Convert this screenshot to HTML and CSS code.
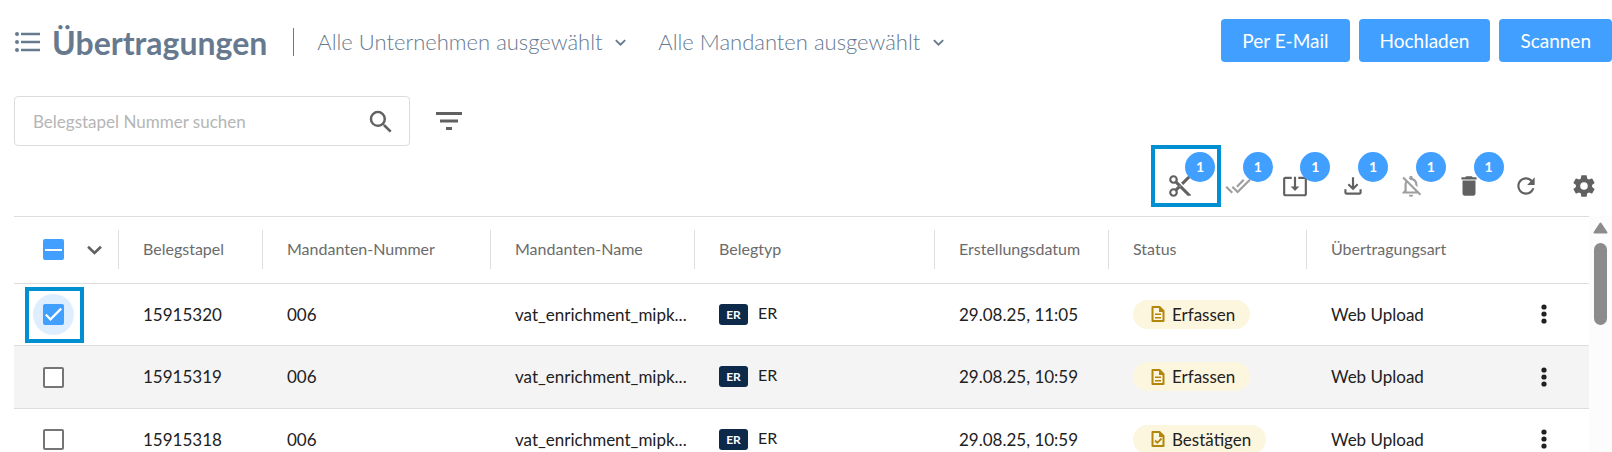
FILE: index.html
```html
<!DOCTYPE html>
<html lang="de">
<head>
    <meta charset="UTF-8">
    <meta name="viewport" content="width=device-width, initial-scale=1">
    <title>Übertragungen</title>
    <link rel="stylesheet" href="styles.css">
</head>
<body>
    <!-- icons used more than once -->
    <svg class="sprite" aria-hidden="true">
        <symbol id="chevron" viewBox="0 0 14 9">
            <path d="M1 1.500l6 5.800 6-5.800" fill="none" stroke="currentColor" stroke-width="2.400"/>
        </symbol>
        <symbol id="more" viewBox="0 0 6 20">
            <circle cx="3" cy="3" r="2.600"/><circle cx="3" cy="10" r="2.600"/><circle cx="3" cy="17" r="2.600"/>
        </symbol>
        <symbol id="doc-text" viewBox="0 0 14 18">
            <path d="M1.500 2h7L12.500 6V16h-11z" fill="none" stroke="currentColor" stroke-width="2" stroke-linejoin="round"/>
            <path d="M8 1.500V7h5zM4 8.500h6V10H4zM4 12h6v1.500H4z"/>
        </symbol>
        <symbol id="doc-check" viewBox="0 0 14 18">
            <path d="M1.500 2h7L12.500 6V16h-11z" fill="none" stroke="currentColor" stroke-width="2" stroke-linejoin="round"/>
            <path d="M8 1.500V7h5z"/>
            <path d="M4 10.500l2.300 2.300L10.500 8.500" fill="none" stroke="currentColor" stroke-width="1.800"/>
        </symbol>
    </svg>

    <header class="header">
        <svg class="title-icon" viewBox="0 0 26 22" aria-hidden="true">
            <circle cx="2" cy="3" r="2"/><circle cx="2" cy="11" r="2"/><circle cx="2" cy="19" r="2"/>
            <path d="M6 1.700h19v2.600H6zM6 9.700h19v2.600H6zM6 17.700h19v2.600H6z"/>
        </svg>
        <h1>Übertragungen</h1>
        <div class="scope">
            <div class="picker">
                <select aria-label="Unternehmen">
                    <option>Alle Unternehmen ausgewählt</option>
                </select>
                <svg class="picker-arrow" aria-hidden="true"><use href="#chevron"/></svg>
            </div>
            <div class="picker">
                <select aria-label="Mandanten">
                    <option>Alle Mandanten ausgewählt</option>
                </select>
                <svg class="picker-arrow" aria-hidden="true"><use href="#chevron"/></svg>
            </div>
        </div>
        <div class="actions">
            <button class="btn" type="button">Per E-Mail</button>
            <button class="btn" type="button">Hochladen</button>
            <button class="btn" type="button">Scannen</button>
        </div>
    </header>

    <form class="search-row">
        <div class="search">
            <input type="text" aria-label="Belegstapel Nummer suchen" placeholder="Belegstapel Nummer suchen">
            <button class="plain" type="button" aria-label="Suchen">
                <svg class="icon icon-lg" viewBox="0 0 24 24"><path d="M15.500 14h-.79l-.28-.27A6.471 6.471 0 0 0 16 9.500 6.500 6.500 0 1 0 9.500 16c1.610 0 3.090-.59 4.230-1.570l.27.28v.79l5 4.990L20.490 19l-4.990-5zm-6 0C7.010 14 5 11.990 5 9.500S7.010 5 9.500 5 14 7.010 14 9.500 11.990 14 9.500 14z"/></svg>
            </button>
        </div>
        <button class="plain" type="button" aria-label="Filter">
            <svg class="icon filter-icon" viewBox="0 0 26 18"><path d="M0 0h26v3H0zM4 7.500h18v3H4zM10 15h6v3h-6z"/></svg>
        </button>
    </form>

    <div class="toolbar">
        <button class="tool" type="button" aria-label="Trennen">
            <svg class="icon" viewBox="0 0 24 24"><path d="M19,3L13,9L15,11L22,4V3M12,12.500A0.500,0.500 0 0,1 11.500,12A0.500,0.500 0 0,1 12,11.500A0.500,0.500 0 0,1 12.500,12A0.500,0.500 0 0,1 12,12.500M6,20A2,2 0 0,1 4,18C4,16.890 4.900,16 6,16A2,2 0 0,1 8,18C8,19.110 7.100,20 6,20M6,8A2,2 0 0,1 4,6C4,4.890 4.900,4 6,4A2,2 0 0,1 8,6C8,7.110 7.100,8 6,8M9.640,7.640C9.870,7.140 10,6.590 10,6A4,4 0 0,0 6,2A4,4 0 0,0 2,6A4,4 0 0,0 6,10C6.590,10 7.140,9.870 7.640,9.640L10,12L7.640,14.360C7.140,14.130 6.590,14 6,14A4,4 0 0,0 2,18A4,4 0 0,0 6,22A4,4 0 0,0 10,18C10,17.410 9.870,16.860 9.640,16.360L12,14L19,21H22V20L9.640,7.640Z"/></svg>
            <span class="badge">1</span>
            <span class="marker marker-tool"></span>
        </button>
        <button class="tool" type="button" aria-label="Bestätigen" disabled>
            <svg class="icon" viewBox="0 0 24 24"><path d="M18 7l-1.410-1.410-6.340 6.340 1.410 1.410L18 7zm4.240-1.410L11.660 16.170 7.480 12l-1.410 1.410L11.660 19l12-12-1.420-1.410zM.41 13.410L6 19l1.410-1.410L1.830 12 .41 13.410z"/></svg>
            <span class="badge">1</span>
        </button>
        <button class="tool" type="button" aria-label="Exportieren">
            <svg class="icon" viewBox="0 0 24 24"><path d="M12 16.500l4-4h-3v-9h-2v9H8l4 4zm9-13h-6v1.990h6v14.030H3V5.490h6V3.500H3c-1.100 0-2 .9-2 2v14c0 1.100.9 2 2 2h18c1.100 0 2-.9 2-2v-14c0-1.100-.9-2-2-2z"/></svg>
            <span class="badge">1</span>
        </button>
        <button class="tool" type="button" aria-label="Herunterladen">
            <svg class="icon" viewBox="0 0 24 24"><path d="M4 15h2v3h12v-3h2v3c0 1.100-.9 2-2 2H6c-1.100 0-2-.9-2-2zM12 16l-5-5 1.400-1.400 2.600 2.600V4h2v8.200l2.600-2.600L17 11z"/></svg>
            <span class="badge">1</span>
        </button>
        <button class="tool" type="button" aria-label="Stummschalten" disabled>
            <svg class="icon" viewBox="0 0 24 24"><path d="M12 22c1.100 0 2-.9 2-2h-4c0 1.100.9 2 2 2zm0-15.500c2.490 0 4 2.020 4 4.500v.1l2 2V11c0-3.070-1.630-5.640-4.500-6.320V4c0-.83-.67-1.500-1.500-1.500s-1.500.67-1.500 1.500v.68c-.24.06-.47.15-.69.23l1.640 1.640c.18-.02.36-.05.55-.05zM5.410 3.350L4 4.760l2.810 2.810C6.290 8.570 6 9.740 6 11v5l-2 2v1h14.240l1.740 1.740 1.410-1.410L5.410 3.350zM16 17H8v-6c0-.68.12-1.320.34-1.900L16 16.760V17z"/></svg>
            <span class="badge">1</span>
        </button>
        <button class="tool" type="button" aria-label="Löschen">
            <svg class="icon" viewBox="0 0 24 24"><path d="M6 19c0 1.100.9 2 2 2h8c1.100 0 2-.9 2-2V7H6v12zM19 4h-3.500l-1-1h-5l-1 1H5v2h14V4z"/></svg>
            <span class="badge">1</span>
        </button>
        <button class="tool" type="button" aria-label="Aktualisieren">
            <svg class="icon" viewBox="0 0 24 24"><path d="M17.650 6.350C16.200 4.900 14.210 4 12 4c-4.420 0-7.990 3.580-7.990 8s3.570 8 7.990 8c3.730 0 6.840-2.550 7.730-6h-2.080c-.82 2.330-3.040 4-5.650 4-3.310 0-6-2.690-6-6s2.690-6 6-6c1.660 0 3.140.69 4.220 1.780L13 11h7V4l-2.350 2.350z"/></svg>
        </button>
        <button class="tool" type="button" aria-label="Einstellungen">
            <svg class="icon" viewBox="0 0 24 24"><path d="M12,15.500A3.500,3.500 0 0,1 8.500,12A3.500,3.500 0 0,1 12,8.500A3.500,3.500 0 0,1 15.500,12A3.500,3.500 0 0,1 12,15.500M19.430,12.970C19.470,12.650 19.500,12.330 19.500,12C19.500,11.670 19.470,11.340 19.430,11L21.540,9.370C21.730,9.220 21.780,8.950 21.660,8.730L19.660,5.270C19.540,5.050 19.270,4.960 19.050,5.050L16.560,6.050C16.040,5.660 15.500,5.320 14.870,5.070L14.500,2.420C14.460,2.180 14.250,2 14,2H10C9.750,2 9.540,2.180 9.500,2.420L9.130,5.070C8.500,5.320 7.960,5.660 7.440,6.050L4.950,5.050C4.730,4.960 4.460,5.050 4.340,5.270L2.340,8.730C2.210,8.950 2.270,9.220 2.460,9.370L4.570,11C4.530,11.340 4.500,11.670 4.500,12C4.500,12.330 4.530,12.650 4.570,12.970L2.460,14.630C2.270,14.780 2.210,15.050 2.340,15.270L4.340,18.730C4.460,18.950 4.730,19.030 4.950,18.950L7.440,17.940C7.960,18.340 8.500,18.680 9.130,18.930L9.500,21.580C9.540,21.820 9.750,22 10,22H14C14.250,22 14.460,21.820 14.500,21.580L14.870,18.930C15.500,18.670 16.040,18.340 16.560,17.940L19.050,18.950C19.270,19.030 19.540,18.950 19.660,18.730L21.660,15.270C21.780,15.050 21.730,14.780 21.540,14.630L19.430,12.970Z"/></svg>
        </button>
    </div>

    <main class="list">
        <div class="table-wrap">
            <table>
                <colgroup>
                    <col class="c-check"><col class="c-batch"><col class="c-number"><col class="c-name">
                    <col class="c-type"><col class="c-date"><col class="c-status"><col><col class="c-menu">
                </colgroup>
                <thead>
                    <tr>
                        <th>
                            <div class="select-cell">
                                <input class="check mixed" type="checkbox" aria-label="Alle auswählen">
                                <button class="plain" type="button" aria-label="Auswahloptionen">
                                    <svg class="select-arrow" aria-hidden="true"><use href="#chevron"/></svg>
                                </button>
                            </div>
                        </th>
                        <th><span>Belegstapel</span></th>
                        <th><span>Mandanten-Nummer</span></th>
                        <th><span>Mandanten-Name</span></th>
                        <th><span>Belegtyp</span></th>
                        <th><span>Erstellungsdatum</span></th>
                        <th><span>Status</span></th>
                        <th><span>Übertragungsart</span></th>
                        <th></th>
                    </tr>
                </thead>
                <tbody>
                    <tr>
                        <td>
                            <div class="select-cell">
                                <span class="halo"><input class="check" type="checkbox" aria-label="15915320" checked></span>
                                <span class="marker marker-row"></span>
                            </div>
                        </td>
                        <td>15915320</td>
                        <td>006</td>
                        <td>vat_enrichment_mipk...</td>
                        <td><div class="type"><span class="type-tag">ER</span><span class="type-name">ER</span></div></td>
                        <td>29.08.25, 11:05</td>
                        <td><span class="status"><svg class="status-icon" aria-hidden="true"><use href="#doc-text"/></svg>Erfassen</span></td>
                        <td>Web Upload</td>
                        <td><button class="plain menu" type="button" aria-label="Mehr"><svg class="menu-icon"><use href="#more"/></svg></button></td>
                    </tr>
                    <tr>
                        <td><div class="select-cell"><input class="check" type="checkbox" aria-label="15915319"></div></td>
                        <td>15915319</td>
                        <td>006</td>
                        <td>vat_enrichment_mipk...</td>
                        <td><div class="type"><span class="type-tag">ER</span><span class="type-name">ER</span></div></td>
                        <td>29.08.25, 10:59</td>
                        <td><span class="status"><svg class="status-icon" aria-hidden="true"><use href="#doc-text"/></svg>Erfassen</span></td>
                        <td>Web Upload</td>
                        <td><button class="plain menu" type="button" aria-label="Mehr"><svg class="menu-icon"><use href="#more"/></svg></button></td>
                    </tr>
                    <tr>
                        <td><div class="select-cell"><input class="check" type="checkbox" aria-label="15915318"></div></td>
                        <td>15915318</td>
                        <td>006</td>
                        <td>vat_enrichment_mipk...</td>
                        <td><div class="type"><span class="type-tag">ER</span><span class="type-name">ER</span></div></td>
                        <td>29.08.25, 10:59</td>
                        <td><span class="status"><svg class="status-icon" aria-hidden="true"><use href="#doc-check"/></svg>Bestätigen</span></td>
                        <td>Web Upload</td>
                        <td><button class="plain menu" type="button" aria-label="Mehr"><svg class="menu-icon"><use href="#more"/></svg></button></td>
                    </tr>
                </tbody>
            </table>
        </div>
        <div class="scrollbar" aria-hidden="true">
            <svg class="scroll-up" viewBox="0 0 15 12"><path d="M7.500 1.500 13.500 10.500h-12z" stroke="currentColor" stroke-width="2" stroke-linejoin="round"/></svg>
            <div class="scroll-thumb"></div>
        </div>
    </main>
</body>
</html>
```
FILE: styles.css
```css
* {
    box-sizing: border-box;
}

body {
    display: flex;
    flex-direction: column;
    height: 100vh;
    margin: 0;
    overflow: hidden;
    background-color: #fff;
    color: #212121;
    font-family: Lato, "Liberation Sans", sans-serif;
    font-size: 17px;
}

button, input, select {
    font-family: inherit;
}

svg {
    display: block;
    fill: currentColor;
}

.sprite {
    position: absolute;
    width: 0;
    height: 0;
}

.plain {
    padding: 0;
    border: none;
    background: none;
    color: #616161;
    cursor: pointer;
}

.icon {
    width: 26px;
    height: 26px;
}

.icon-lg {
    width: 30px;
    height: 30px;
}

/* header */
.header {
    display: flex;
    flex-shrink: 0;
    align-items: center;
    padding: 19px 0 0 15px;
    color: #66798f;
}

.title-icon {
    width: 26px;
    height: 22px;
}

h1 {
    margin: 0 26px 0 11px;
    padding-top: 2px;
    font-size: 32px;
    line-height: 44px;
}

.scope {
    display: flex;
    align-items: center;
    gap: 32px;
    height: 28px;
    padding-left: 23px;
    border-left: 1px solid #66798f;
}

.picker {
    display: flex;
    align-items: center;
    gap: 12px;
}

.picker select {
    appearance: none;
    padding: 0;
    border: none;
    background: none;
    color: #66798f;
    font-size: 22px;
    font-weight: 300;
    line-height: 28px;
}

.picker-arrow {
    width: 11px;
    height: 7px;
}

.actions {
    display: flex;
    align-self: flex-start;
    gap: 9px;
    margin-left: auto;
}

.btn {
    height: 43px;
    padding: 0 21px;
    border: none;
    border-radius: 4px;
    background-color: #409fff;
    color: #fff;
    font-size: 19px;
    cursor: pointer;
}

/* search */
.search-row {
    display: flex;
    flex-shrink: 0;
    align-items: center;
    gap: 26px;
    padding: 31px 14px 17px;
}

.search {
    display: flex;
    align-items: center;
    width: 396px;
    height: 50px;
    padding: 2px 13px 0 18px;
    border: 1px solid #dcdcdc;
    border-radius: 4px;
}

.search input {
    flex: 1;
    min-width: 0;
    padding: 0 0 2px;
    border: none;
    outline: none;
    font-size: 17px;
}

.search input::placeholder {
    color: #b5b5b5;
}

.filter-icon {
    height: 18px;
}

/* toolbar */
.toolbar {
    display: flex;
    flex-shrink: 0;
    align-self: flex-end;
    justify-content: space-between;
    width: 450px;
    margin-right: 5px;
    padding-bottom: 7px;
}

.tool {
    position: relative;
    display: flex;
    align-items: center;
    justify-content: center;
    width: 46px;
    height: 46px;
    padding: 0;
    border: none;
    background: none;
    color: #616161;
    cursor: pointer;
}

.tool:disabled {
    color: #9e9e9e;
}

.badge {
    position: absolute;
    top: -11px;
    left: 28px;
    width: 30px;
    height: 30px;
    border-radius: 50%;
    background-color: #409fff;
    color: #fff;
    font-size: 14px;
    font-weight: 700;
    line-height: 30px;
    text-align: center;
}

.marker {
    position: absolute;
    border: 4px solid #0090d2;
    pointer-events: none;
}

.marker-tool {
    top: -18px;
    left: -6px;
    width: 70px;
    height: 62px;
}

.marker-row {
    top: -7px;
    left: 11px;
    width: 59px;
    height: 56px;
}

/* table */
.list {
    display: flex;
    flex: 1;
    min-height: 0;
    padding-left: 14px;
}

.table-wrap {
    flex: 1;
    min-width: 0;
    border-top: 1px solid #dedede;
}

table {
    width: 100%;
    table-layout: fixed;
    border-spacing: 0;
}

.c-check { width: 104px; }
.c-batch { width: 144px; }
.c-number { width: 228px; }
.c-name { width: 204px; }
.c-type { width: 240px; }
.c-date { width: 174px; }
.c-status { width: 198px; }
.c-menu { width: 90px; }

th, td {
    padding: 0;
    border-bottom: 1px solid #dedede;
    text-align: left;
    white-space: nowrap;
}

th {
    height: 67px;
    padding-bottom: 1px;
    color: #6b6b6b;
    font-size: 16px;
    font-weight: 400;
}

td {
    height: 62px;
    padding: 0 0 1px 25px;
}

td:first-child {
    padding: 0;
}

td:last-child {
    padding-left: 0;
}

th span {
    display: block;
    padding: 0 0 2px 24px;
    border-left: 1px solid #dedede;
    line-height: 37px;
}

tbody tr:nth-child(even) {
    background-color: #f4f4f4;
}

tbody tr:nth-child(even) td {
    height: 63px;
}

.select-cell {
    position: relative;
    display: flex;
    align-items: center;
    gap: 23px;
    height: 41px;
    padding-left: 29px;
}

.check {
    appearance: none;
    flex-shrink: 0;
    width: 21px;
    height: 21px;
    margin: 0;
    border: 2px solid #757575;
    border-radius: 2px;
    background-color: #fff;
}

.check:checked, .check.mixed {
    display: flex;
    align-items: center;
    justify-content: center;
    border-color: #409fff;
    background-color: #409fff;
}

.check.mixed::before {
    width: 17px;
    height: 2px;
    background-color: #fff;
    content: "";
}

.check:checked::before {
    width: 17px;
    height: 17px;
    background-color: #fff;
    clip-path: polygon(0 55%, 9% 46%, 32% 69%, 90% 10%, 100% 20%, 32% 88%);
    content: "";
}

.halo {
    display: flex;
    align-items: center;
    justify-content: center;
    width: 41px;
    height: 41px;
    margin-left: -10px;
    border-radius: 50%;
    background-color: #dfeeff;
}

.select-arrow {
    width: 15px;
    height: 10px;
}

.type {
    display: flex;
    align-items: center;
    gap: 10px;
}

.type-tag {
    width: 29px;
    border-radius: 3px;
    background-color: #0d2a4b;
    color: #fff;
    font-size: 12px;
    font-weight: 700;
    line-height: 21px;
    text-align: center;
}

.type-name {
    padding-bottom: 4px;
    font-size: 16px;
}

.status {
    display: inline-flex;
    align-items: center;
    gap: 7px;
    height: 29px;
    padding: 0 15px 0 18px;
    border-radius: 15px;
    background-color: #fdf6df;
}

.status-icon {
    width: 14px;
    height: 18px;
    color: #b3860b;
}

.menu {
    display: flex;
    justify-content: center;
    width: 100%;
    color: #212121;
}

.menu-icon {
    width: 6px;
    height: 20px;
}

/* scrollbar */
.scrollbar {
    display: flex;
    flex-direction: column;
    align-items: center;
    gap: 9px;
    width: 23px;
    padding-top: 6px;
    background-color: #fcfcfc;
    color: #8b8b8b;
}

.scroll-up {
    width: 15px;
    height: 12px;
}

.scroll-thumb {
    width: 13px;
    height: 82px;
    border-radius: 7px;
    background-color: #8b8b8b;
}
```
